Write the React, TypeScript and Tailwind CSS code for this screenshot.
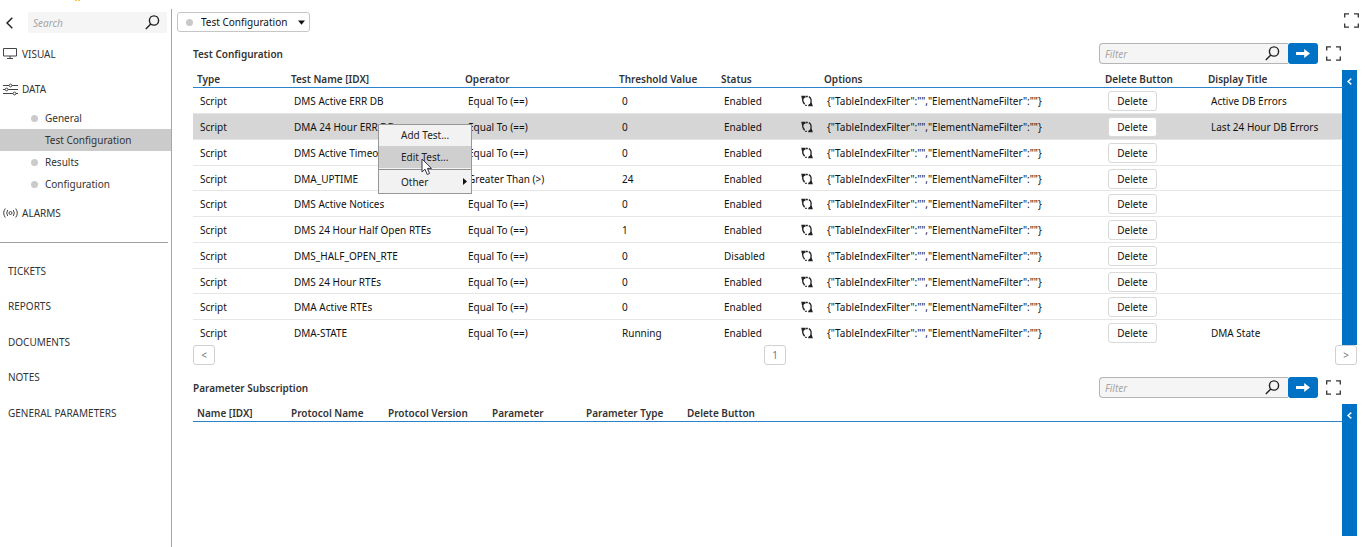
import { useState } from "react";

type TestRow = {
  name: string;
  operator: string;
  threshold: string;
  status: string;
  title?: string;
};

const OPTIONS = '{"TableIndexFilter":"","ElementNameFilter":""}';

const TESTS: TestRow[] = [
  { name: "DMS Active ERR DB", operator: "Equal To (==)", threshold: "0", status: "Enabled", title: "Active DB Errors" },
  { name: "DMA 24 Hour ERR DB", operator: "Equal To (==)", threshold: "0", status: "Enabled", title: "Last 24 Hour DB Errors" },
  { name: "DMS Active Timeouts", operator: "Equal To (==)", threshold: "0", status: "Enabled" },
  { name: "DMA_UPTIME", operator: "Greater Than (>)", threshold: "24", status: "Enabled" },
  { name: "DMS Active Notices", operator: "Equal To (==)", threshold: "0", status: "Enabled" },
  { name: "DMS 24 Hour Half Open RTEs", operator: "Equal To (==)", threshold: "1", status: "Enabled" },
  { name: "DMS_HALF_OPEN_RTE", operator: "Equal To (==)", threshold: "0", status: "Disabled" },
  { name: "DMS 24 Hour RTEs", operator: "Equal To (==)", threshold: "0", status: "Enabled" },
  { name: "DMA Active RTEs", operator: "Equal To (==)", threshold: "0", status: "Enabled" },
  { name: "DMA-STATE", operator: "Equal To (==)", threshold: "Running", status: "Enabled", title: "DMA State" },
];

const PAGES = ["General", "Test Configuration", "Results", "Configuration"];
const LINKS = ["TICKETS", "REPORTS", "DOCUMENTS", "NOTES", "GENERAL PARAMETERS"];

function SearchIcon() {
  return (
    <svg viewBox="0 0 15 15" className="h-[15px] w-[15px] shrink-0" fill="none" stroke="#222" strokeWidth="1.4">
      <circle cx="9" cy="5.5" r="4.6" />
      <path d="M5.8 9 L0.8 14" />
    </svg>
  );
}

function ExpandIcon() {
  return (
    <svg viewBox="0 0 15 15" className="h-[15px] w-[15px]" fill="none" stroke="#333" strokeWidth="1.3">
      <path d="M0.7 4.5V0.8H5M10 0.8h4.3v3.7M14.3 10.5v3.7H10M5 14.2H0.7v-3.7" />
    </svg>
  );
}

function RefreshIcon() {
  return (
    <svg viewBox="0 0 12 12" className="h-3 w-3 shrink-0" fill="none" stroke="#222" strokeWidth="1.3">
      <path d="M2 2.8 C1.3 5 1.9 7.4 3.6 9.2" />
      <path d="M7.8 1.6 C9.6 2.6 10.4 4.6 10 6.8 L9.8 9" />
      <path d="M0.2 0.8 H4.6 V2.4 L1 4.2 Z M11.9 11.3 H7 L7.6 9.6 L10.6 7.6 Z" fill="#222" stroke="none" />
      <path d="M5 1.5 H6.8 M4.2 10.4 H5.8" />
    </svg>
  );
}

function FilterBar({ label }: { label: string }) {
  return (
    <div className="flex items-center">
      <div className="flex h-[21px] w-[189px] items-center rounded-l-[4px] border border-r-0 border-[#b5b5b5] bg-[#f5f5f5] pr-[8px] pl-[5px]">
        <input
          aria-label={label}
          placeholder="Filter"
          className="h-full min-w-0 flex-1 bg-transparent italic outline-none placeholder:text-[#a6a6a6]"
        />
        <SearchIcon />
      </div>
      <button aria-label="Apply filter" className="flex h-[21px] w-[30px] items-center justify-center rounded-[3px] bg-[#0072c6]">
        <svg viewBox="0 0 14 9" className="h-[9px] w-[14px]" fill="#fff">
          <path d="M0 3H8.2V0L14 4.5L8.2 9V6H0Z" />
        </svg>
      </button>
      <button aria-label="Full screen" className="ml-[8px]">
        <ExpandIcon />
      </button>
    </div>
  );
}

function SideHandle() {
  return (
    <button aria-label="Show panel" className="flex w-[15px] shrink-0 justify-center bg-[#0072c6] pt-[8px]">
      <svg viewBox="0 0 5 7" className="h-[7px] w-[5px]" fill="none" stroke="#fff" strokeWidth="1.4">
        <path d="M4.3 0.6 L1 3.5 L4.3 6.4" />
      </svg>
    </button>
  );
}

function HeaderRow({ titles }: { titles: string[] }) {
  return (
    <thead>
      <tr className="h-[17px]">
        {titles.map((t) => (
          <th key={t} scope="col" className="border-b border-[#2a84cb] p-0 pt-[2px] pl-[4px] text-left leading-[14px] font-semibold text-[#333]">{t}</th>
        ))}
      </tr>
    </thead>
  );
}

function ContextMenu() {
  return (
    <div role="menu" className="absolute top-[10px] left-[91px] z-10 w-[94px] border border-[#979797] bg-[#f2f2f2] text-[#222]">
      <button role="menuitem" className="block h-[21px] w-full pl-[22px] text-left">Add Test...</button>
      <button role="menuitem" className="block h-[22px] w-full bg-[#cfcfcf] pl-[22px] text-left">Edit Test...</button>
      <button role="menuitem" className="mt-px flex h-[24px] w-full items-center justify-between border-t border-[#8f8f8f] pt-px pr-[4px] pl-[22px]">
        Other
        <svg viewBox="0 0 4 7" className="h-[7px] w-[4px]" fill="#111"><path d="M0 0L4 3.5L0 7Z" /></svg>
      </button>
      <svg viewBox="0 0 12 18" className="pointer-events-none absolute top-[33px] left-[42px] h-[18px] w-[12px]" fill="#fff" stroke="#33334a" strokeWidth="1">
        <path d="M1 1V14L4 11.2L6.2 16.5L8.6 15.5L6.4 10.4H10.5Z" />
      </svg>
    </div>
  );
}

function PagerButton({ children, label }: { children: string; label: string }) {
  return (
    <button aria-label={label} className="h-[20px] w-[22px] rounded-[3px] border border-[#d0d0d0] bg-white text-[#777]">
      {children}
    </button>
  );
}

export default function App() {
  const [page, setPage] = useState("Test Configuration");

  return (
    <div className="flex min-h-screen flex-col bg-white font-['Noto_Sans','Open_Sans',sans-serif] text-[10px] leading-[16px] text-[#111]">
      <div className="h-[9px] pl-[75px]">
        <svg viewBox="0 0 5 1" className="h-px w-[5px]" fill="#f9c846"><path d="M0 0h2v1H0zM3 0h2v1H3z" /></svg>
      </div>
      <div className="flex flex-1">
        <nav className="w-[172px] shrink-0 border-r border-[#a6a6a6] text-[#333]">
          <div className="flex h-[27px] items-start pt-[3px] pr-[4px] pl-[6px]">
            <button aria-label="Back" className="flex h-[21px] w-[22px] shrink-0 items-center">
              <svg viewBox="0 0 7 12" className="h-3 w-[7px]" fill="none" stroke="#222" strokeWidth="1.5"><path d="M6.3 0.7L1 6L6.3 11.3" /></svg>
            </button>
            <div className="flex h-[21px] min-w-0 flex-1 items-center rounded-[2px] bg-[#f5f5f5] pr-[7px] pl-[5px]">
              <input aria-label="Search" placeholder="Search" className="h-full min-w-0 flex-1 bg-transparent italic outline-none placeholder:text-[#a6a6a6]" />
              <SearchIcon />
            </div>
          </div>
          <a href="#visual" className="flex h-[35px] items-center gap-[5px] pl-[3px]">
            <svg viewBox="0 0 14 11" className="h-[11px] w-[14px]" fill="none" stroke="#444" strokeWidth="1">
              <path d="M0.5 0.5h13v7.5H0.5zM7 8v2.5M4 10.5h6" />
            </svg>
            VISUAL
          </a>
          <a href="#data" className="flex h-[36px] items-center gap-[4px] pl-[3px]">
            <svg viewBox="0 0 15 13" className="h-[13px] w-[15px]" fill="none" stroke="#444" strokeWidth="1">
              <path d="M0 2.5H6M9 2.5H15M0 6.5H2M5 6.5H15M0 10.5H10M13 10.5H15" />
              <circle cx="7.5" cy="2.5" r="1.4" /><circle cx="3.5" cy="6.5" r="1.4" /><circle cx="11.5" cy="10.5" r="1.4" />
            </svg>
            DATA
          </a>
          {PAGES.map((p) => (
            <a
              key={p}
              href="#page"
              onClick={() => setPage(p)}
              className={p === page ? "flex h-[22px] items-center gap-[7px] bg-[#cbcbcb] pl-[31px]" : "flex h-[22px] items-center gap-[7px] pl-[31px]"}
            >
              <span className="h-[7px] w-[7px] rounded-full bg-[#cbcbcb]" />
              {p}
            </a>
          ))}
          <a href="#alarms" className="flex h-[36px] items-center gap-[4px] pl-[3px]">
            <svg viewBox="0 0 15 10" className="h-[10px] w-[15px]" fill="none" stroke="#444" strokeWidth="1">
              <circle cx="7.5" cy="5" r="1.5" />
              <path d="M2.3 0.5Q-0.9 5 2.3 9.5M12.7 0.5Q15.9 5 12.7 9.5M4.7 2Q2.7 5 4.7 8M10.3 2Q12.3 5 10.3 8" />
            </svg>
            ALARMS
          </a>
          <hr className="mt-[11px] mr-[3px] mb-[10px] border-[#a0a0a0]" />
          {LINKS.map((l) => (
            <a key={l} href="#section" className="flex h-[36px] items-center pl-[8px] even:h-[35px]">{l}</a>
          ))}
        </nav>

        <main className="flex min-w-0 flex-1 flex-col pr-[8px]">
          <div className="flex items-start justify-between pt-[3px] pl-[5px]">
            <div className="flex h-[20px] w-[133px] items-center rounded-[3px] border border-[#c6c6c6] pr-[4px] pl-[8px]">
              <span className="mr-[8px] h-[7px] w-[7px] shrink-0 rounded-full bg-[#c9c9c9]" />
              <select
                aria-label="Page"
                value={page}
                onChange={(e) => setPage(e.target.value)}
                className="h-full min-w-0 flex-1 appearance-none bg-transparent outline-none"
              >
                {PAGES.map((p) => <option key={p}>{p}</option>)}
              </select>
              <svg viewBox="0 0 7 5" className="h-[5px] w-[7px] shrink-0" fill="#111"><path d="M0 0.5h7L3.5 4.8Z" /></svg>
            </div>
            <button aria-label="Full screen page" className="-mr-[2px] pt-px"><ExpandIcon /></button>
          </div>

          <section className="pt-[11px] pl-[21px]">
            <div className="flex items-center justify-between pr-[16px]">
              <h2 className="font-semibold text-[#333]">Test Configuration</h2>
              <FilterBar label="Filter tests" />
            </div>
            <div className="mt-[6px] flex">
              <table className="w-full table-fixed border-collapse whitespace-nowrap">
                <colgroup>
                  <col className="w-[94px]" />
                  <col className="w-[174px]" />
                  <col className="w-[154px]" />
                  <col className="w-[102px]" />
                  <col className="w-[103px]" />
                  <col className="w-[281px]" />
                  <col className="w-[103px]" />
                  <col />
                </colgroup>
                <HeaderRow titles={["Type", "Test Name [IDX]", "Operator", "Threshold Value", "Status", "Options", "Delete Button", "Display Title"]} />
                <tbody>
                  {TESTS.map((t, i) => (
                    <tr
                      key={t.name}
                      className={i === 1
                        ? "h-[26px] border-b border-[#e6e6e6] bg-[#d6d6d6]"
                        : "h-[26px] border-b border-[#e6e6e6] last:border-b-0 nth-[4n]:h-[25px]"}
                    >
                      <td className="p-0 pt-[2px] pl-[7px]">Script</td>
                      <td className="relative p-0 pt-[2px] pl-[7px]">{t.name}{i === 1 && <ContextMenu />}</td>
                      <td className="p-0 pt-[2px] pl-[7px]">{t.operator}</td>
                      <td className="p-0 pt-[2px] pl-[7px]">{t.threshold}</td>
                      <td className="p-0 pt-[2px] pr-[7px] pl-[7px]">
                        <span className="flex items-center justify-between">{t.status}<RefreshIcon /></span>
                      </td>
                      <td className="p-0 pt-[2px] pl-[7px]">{OPTIONS}</td>
                      <td className="p-0 pt-[2px] pl-[7px]">
                        <button className="block h-[20px] w-[49px] rounded-[3px] border border-[#d9d9d9] bg-white">Delete</button>
                      </td>
                      <td className="p-0 pt-[2px] pl-[7px]">{t.title}</td>
                    </tr>
                  ))}
                </tbody>
              </table>
              <SideHandle />
            </div>
            <div className="flex justify-between">
              <PagerButton label="Previous page">{"<"}</PagerButton>
              <PagerButton label="Page 1">1</PagerButton>
              <PagerButton label="Next page">{">"}</PagerButton>
            </div>
          </section>

          <section className="flex flex-1 flex-col pt-[12px] pb-[11px] pl-[21px]">
            <div className="flex items-center justify-between pr-[16px]">
              <h2 className="font-semibold text-[#333]">Parameter Subscription</h2>
              <FilterBar label="Filter parameters" />
            </div>
            <div className="mt-[6px] flex flex-1">
              <div className="flex-1">
                <table className="w-full table-fixed border-collapse whitespace-nowrap">
                  <colgroup>
                    <col className="w-[94px]" />
                    <col className="w-[97px]" />
                    <col className="w-[104px]" />
                    <col className="w-[94px]" />
                    <col className="w-[101px]" />
                    <col />
                  </colgroup>
                  <HeaderRow titles={["Name [IDX]", "Protocol Name", "Protocol Version", "Parameter", "Parameter Type", "Delete Button"]} />
                </table>
              </div>
              <SideHandle />
            </div>
          </section>
        </main>
      </div>
    </div>
  );
}
